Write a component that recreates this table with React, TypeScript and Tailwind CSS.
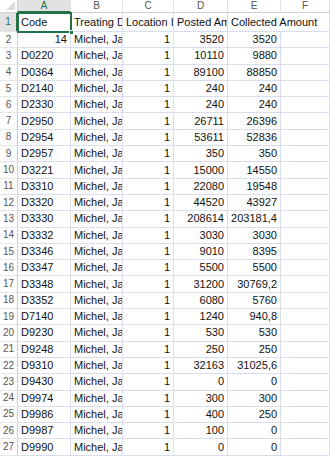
import React from 'react';

const cols = ['A', 'B', 'C', 'D', 'E', 'F'];

// code, posted, collected
const rows: [string, string, string][] = [
  ['D0220', '10110', '9880'],
  ['D0364', '89100', '88850'],
  ['D2140', '240', '240'],
  ['D2330', '240', '240'],
  ['D2950', '26711', '26396'],
  ['D2954', '53611', '52836'],
  ['D2957', '350', '350'],
  ['D3221', '15000', '14550'],
  ['D3310', '22080', '19548'],
  ['D3320', '44520', '43927'],
  ['D3330', '208614', '203181,4'],
  ['D3332', '3030', '3030'],
  ['D3346', '9010', '8395'],
  ['D3347', '5500', '5500'],
  ['D3348', '31200', '30769,2'],
  ['D3352', '6080', '5760'],
  ['D7140', '1240', '940,8'],
  ['D9230', '530', '530'],
  ['D9248', '250', '250'],
  ['D9310', '32163', '31025,6'],
  ['D9430', '0', '0'],
  ['D9974', '300', '300'],
  ['D9986', '400', '250'],
  ['D9987', '100', '0'],
  ['D9990', '0', '0'],
];

const cell = 'border-r border-b border-[#dadcf0] overflow-hidden whitespace-nowrap px-[3px] leading-none flex items-center';
const head = 'border-r border-b border-[#e1e1e1] flex items-center justify-center text-[10px] text-[#555] leading-none';

function Row({ n, a, d, e, numA }: { n: number; a: string; d: string; e: string; numA?: boolean }) {
  return (
    <>
      <div className={`${head} !border-r-[#d0d0d0] !border-b-[#e6e6e6]`}>{n}</div>
      <div className={`${cell} ${numA ? 'justify-end' : ''}`}>{a}</div>
      <div className={cell}>Michel, Ja</div>
      <div className={`${cell} justify-end`}>1</div>
      <div className={`${cell} justify-end`}>{d}</div>
      <div className={`${cell} justify-end`}>{e}</div>
      <div className={cell} />
    </>
  );
}

export default function App() {
  return (
    <div className="w-[330px] h-[458px] bg-white overflow-hidden text-[11px] text-[#111]" style={{ fontFamily: '"Liberation Sans", Arial, sans-serif' }}>
      <div className="relative grid grid-cols-[18px_53px_52px_51px_54px_53px_1fr] grid-rows-[13px_19px_repeat(26,16.3px)]">
        {/* corner */}
        <div className="relative border-r border-b border-[#d0d0d0]">
          <div className="absolute right-[2px] bottom-[2px] w-0 h-0 border-l-[9px] border-l-transparent border-b-[9px] border-b-[#dcdcdc]" />
        </div>
        {cols.map((c) => (
          <div
            key={c}
            className={
              c === 'A'
                ? 'flex items-center justify-center text-[10px] leading-none bg-[#e2e2e2] text-[#217346] border-r border-[#e1e1e1] border-b-2 border-b-[#217346]'
                : `${head} !border-b-[#d0d0d0]`
            }
          >
            {c}
          </div>
        ))}

        {/* row 1 */}
        <div className="flex items-center justify-center text-[10px] leading-none bg-[#e2e2e2] text-[#217346] border-r-2 border-r-[#217346] border-b border-b-[#e6e6e6]">1</div>
        <div className={cell}>Code</div>
        <div className={cell}>Treating Doctor</div>
        <div className={cell}>Location ID</div>
        <div className={cell}>Posted Amount</div>
        <div className="border-b border-[#dadcf0] whitespace-nowrap px-[3px] leading-none flex items-center overflow-visible relative z-10">Collected Amount</div>
        <div className={cell} />

        <Row n={2} a="14" d="3520" e="3520" numA />
        {rows.map((r, i) => (
          <Row key={r[0]} n={i + 3} a={r[0]} d={r[1]} e={r[2]} />
        ))}

        {/* selection box around A1 */}
        <div className="absolute left-[17px] top-[12px] w-[55px] h-[21px] border-2 border-[#217346] pointer-events-none">
          <div className="absolute -right-[4px] -bottom-[4px] w-[5px] h-[5px] bg-[#217346] border border-white" />
        </div>
      </div>
    </div>
  );
}
